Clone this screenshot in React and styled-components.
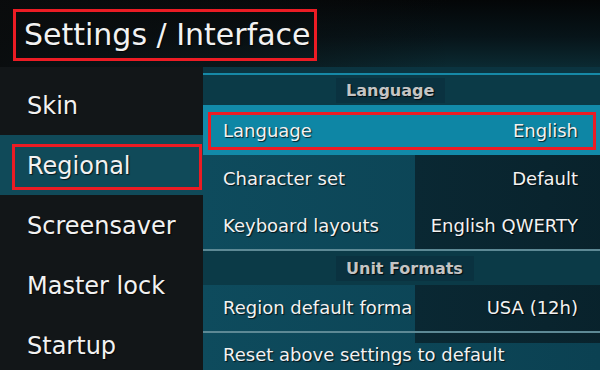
import styled, { createGlobalStyle } from "styled-components"

const RED = '#ec1c24'

const GlobalStyle = createGlobalStyle`
  html, body {
    margin: 0;
    padding: 0;
    background: #0b0e10;
  }
  body {
    font-family: "DejaVu Sans", "Liberation Sans", sans-serif;
  }
`

const Screen = styled.div`
  width: 600px;
  height: 370px;
  overflow: hidden;
  display: grid;
  grid-template-columns: 203px 1fr;
  grid-template-rows: 67px 1fr;
  background: #121618;
  color: #f2f2f2;
`

const Header = styled.header`
  grid-column: 1 / -1;
  display: flex;
  align-items: flex-start;
  padding: 9px 0 0 13px;
  box-sizing: border-box;
  background:
    linear-gradient(90deg, rgba(10, 12, 13, 0.95) 0%, rgba(10, 12, 13, 0.6) 40%, rgba(10, 12, 13, 0) 75%),
    linear-gradient(180deg, #040607 0%, #071419 55%, #0b2a32 100%);
`

const Title = styled.h1`
  margin: 0;
  height: 52px;
  box-sizing: border-box;
  display: inline-flex;
  align-items: center;
  padding: 0 3px 1px 8px;
  border: 3px solid ${p => (p.$marked ? RED : 'transparent')};
  font-size: 30px;
  font-weight: normal;
  white-space: nowrap;
  text-shadow: 1px 1px 1px rgba(0, 0, 0, 0.7);
`

const Nav = styled.nav`
  display: flex;
  flex-direction: column;
  padding-top: 8px;
  background: #121618;
`

const NavItem = styled.div`
  height: 60px;
  box-sizing: border-box;
  padding: 9px 1px 5px 12px;
  background: ${p => (p.$active ? '#104a59' : 'transparent')};
`

const NavLabel = styled.div`
  height: 100%;
  box-sizing: border-box;
  display: flex;
  align-items: center;
  padding: 0 0 3px 12px;
  border: 3px solid ${p => (p.$marked ? RED : 'transparent')};
  font-size: 24px;
  text-shadow: 1px 1px 1px rgba(0, 0, 0, 0.7);
`

const Panel = styled.section`
  display: flex;
  flex-direction: column;
  background: linear-gradient(90deg, #0d4859 0%, #0b3d4c 60%, #093240 100%);
`

const TopStrip = styled.div`
  height: 6px;
  background: #0b3440;
  border-bottom: 2px solid #1689a7;
`

const GroupHeader = styled.div`
  height: ${p => p.$h}px;
  box-sizing: border-box;
  display: flex;
  align-items: center;
  padding-left: 133px;
  border-top: ${p => (p.$line ? '2px solid #5d8995' : 'none')};
  background: #0b3a47;
`

const GroupLabel = styled.span`
  height: 25px;
  display: flex;
  align-items: center;
  padding: 0 11px 0 10px;
  background: #0a3240;
  color: #c4c4c4;
  font-size: 16px;
  font-weight: bold;
  text-shadow: 1px 1px 1px rgba(0, 0, 0, 0.8);
`

const ListBody = styled.div`
  flex: 1;
  display: flex;
  flex-direction: column;
  background:
    linear-gradient(90deg, #0a2833 0%, #071c24 100%) 212px 0 / 100% 188px no-repeat,
    linear-gradient(90deg, #0e4b5d 0%, #0b4152 100%);
`

const Row = styled.div`
  flex-shrink: 0;
  height: ${p => (p.$marked ? 50 : p.$h || 47)}px;
  box-sizing: border-box;
  padding: ${p => (p.$marked ? '7px 4px 5px 5px' : '0')};
  background: ${p => (p.$marked ? '#128aa9' : 'transparent')};
  border-top: ${p => (p.$line ? '2px solid #5d8995' : 'none')};
`

const RowInner = styled.div`
  height: 100%;
  box-sizing: border-box;
  display: flex;
  align-items: center;
  justify-content: space-between;
  padding: ${p => (p.$marked ? '0 15px 1px 12px' : '0 22px 1px 20px')};
  border: ${p => (p.$marked ? `3px solid ${RED}` : 'none')};
  background: ${p => (p.$marked ? '#0e86a5' : 'transparent')};
  font-size: 18px;
  white-space: nowrap;
  text-shadow: 1px 1px 1px rgba(0, 0, 0, 0.75);
`

const RowLabel = styled.span``

const RowValue = styled.span``

function SettingRow({ label, value, marked, line, h }) {
  return (
    <Row $marked={marked} $line={line} $h={h}>
      <RowInner $marked={marked}>
        <RowLabel>{label}</RowLabel>
        {value && <RowValue>{value}</RowValue>}
      </RowInner>
    </Row>
  )
}

const navItems = ['Skin', 'Regional', 'Screensaver', 'Master lock', 'Startup']

export default function App() {
  return (
    <>
      <GlobalStyle />
      <Screen>
        <Header>
          <Title $marked>Settings / Interface</Title>
        </Header>
        <Nav>
          {navItems.map(item => (
            <NavItem key={item} $active={item === 'Regional'}>
              <NavLabel $marked={item === 'Regional'}>{item}</NavLabel>
            </NavItem>
          ))}
        </Nav>
        <Panel>
          <TopStrip />
          <GroupHeader $h={30}>
            <GroupLabel>Language</GroupLabel>
          </GroupHeader>
          <SettingRow marked label="Language" value="English" />
          <ListBody>
            <SettingRow label="Character set" value="Default" />
            <SettingRow label="Keyboard layouts" value="English QWERTY" />
            <GroupHeader $h={36} $line>
              <GroupLabel>Unit Formats</GroupLabel>
            </GroupHeader>
            <SettingRow h={46} label="Region default forma" value="USA (12h)" />
            <SettingRow line h={46} label="Reset above settings to default" />
          </ListBody>
        </Panel>
      </Screen>
    </>
  )
}
